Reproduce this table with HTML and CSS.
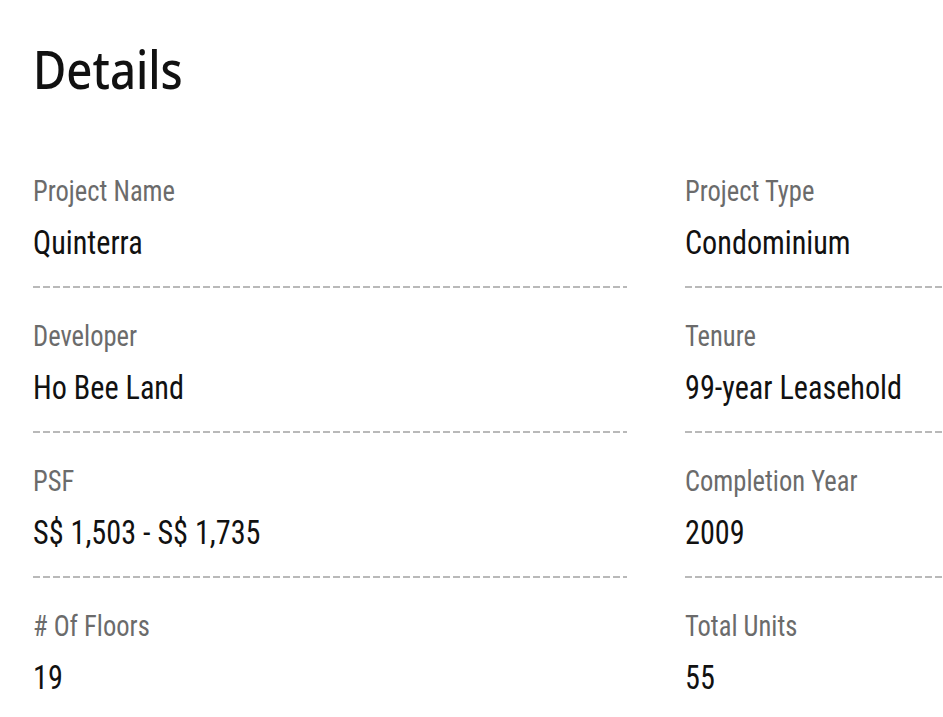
FILE: index.html
```html
<!DOCTYPE html>
<html>
<head>
<meta charset="utf-8">
<link rel="stylesheet" href="styles.css">
</head>
<body>
<main class="page">
  <h1 class="title"><span class="squeeze">Details</span></h1>
  <section class="grid">
    <div class="item"><div class="label"><span class="squeeze">Project Name</span></div><div class="value"><span class="squeeze">Quinterra</span></div></div>
    <div class="item"><div class="label"><span class="squeeze">Project Type</span></div><div class="value"><span class="squeeze">Condominium</span></div></div>
    <div class="item"><div class="label"><span class="squeeze">Developer</span></div><div class="value"><span class="squeeze">Ho Bee Land</span></div></div>
    <div class="item"><div class="label"><span class="squeeze">Tenure</span></div><div class="value"><span class="squeeze">99-year Leasehold</span></div></div>
    <div class="item"><div class="label"><span class="squeeze">PSF</span></div><div class="value"><span class="squeeze">S$ 1,503 - S$ 1,735</span></div></div>
    <div class="item"><div class="label"><span class="squeeze">Completion Year</span></div><div class="value"><span class="squeeze">2009</span></div></div>
    <div class="item last"><div class="label"><span class="squeeze"># Of Floors</span></div><div class="value"><span class="squeeze">19</span></div></div>
    <div class="item last"><div class="label"><span class="squeeze">Total Units</span></div><div class="value"><span class="squeeze">55</span></div></div>
  </section>
</main>
</body>
</html>
```
FILE: styles.css
```css
html, body {
  margin: 0;
  padding: 0;
  background: #ffffff;
  overflow: hidden;
}
.page {
  padding: 37px 0 0 33px;
  width: 1300px;
}
.squeeze {
  display: inline-block;
  transform-origin: left center;
  white-space: nowrap;
}
.title {
  margin: 0;
  font-family: "Noto Sans", sans-serif;
  font-weight: 500;
  font-size: 53px;
  line-height: 64px;
  color: #111111;
}
.title .squeeze {
  transform: scaleX(0.86);
}
.grid {
  display: grid;
  grid-template-columns: 594px 594px;
  column-gap: 58px;
  padding-top: 73px;
}
.item {
  height: 145px;
  box-sizing: border-box;
}
.label {
  font-family: "Roboto Condensed", Roboto, sans-serif;
  font-stretch: condensed;
  font-size: 29px;
  line-height: 34px;
  color: #6b6b6b;
}
.value {
  margin-top: 15px;
  font-family: "Roboto Condensed", Roboto, sans-serif;
  font-stretch: condensed;
  font-size: 33px;
  line-height: 40px;
  color: #111111;
}
.label .squeeze,
.value .squeeze {
  transform: scaleX(0.915);
}
.item::after {
  content: "";
  display: block;
  margin-top: 23px;
  height: 2px;
  background: repeating-linear-gradient(90deg, #b9b9b9 0 7px, transparent 7px 10px);
}
.item.last::after {
  display: none;
}
```
